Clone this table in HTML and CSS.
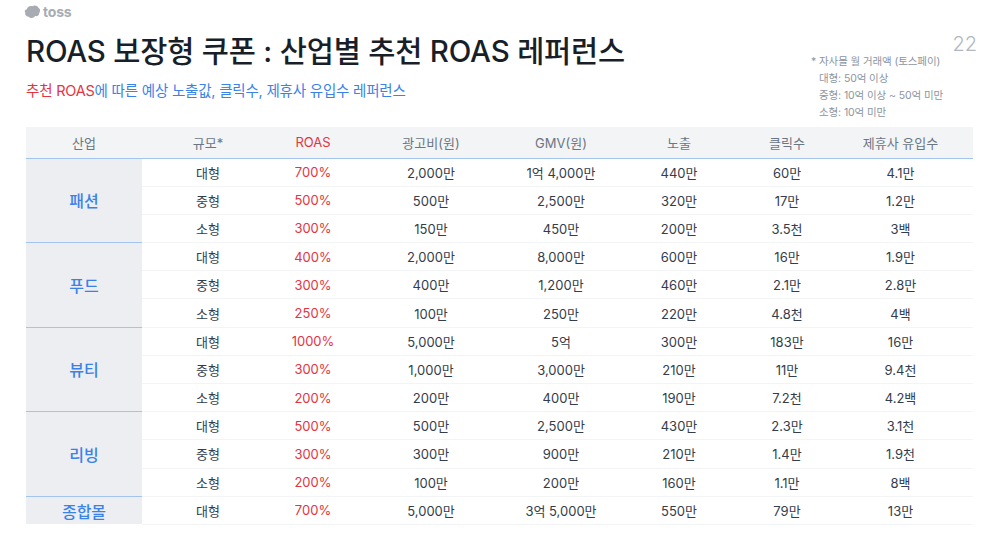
FILE: index.html
```html
<!DOCTYPE html>
<html lang="ko">
<head>
<meta charset="utf-8">
<link rel="stylesheet" href="styles.css">
</head>
<body>
<div class="slide">
  <div class="topbar">
    <div class="logo">
      <svg width="17" height="14" viewBox="0 0 15 13"><path d="M2.2 4.2C2.6 1.6 5.2 0.4 7.4 1.2C9.2 0 12 0.5 13 2.6C14.8 3.4 15 6 13.8 7.4C13.9 9.6 11.8 10.8 10 10.2C8.6 12.4 5.4 12.6 4 10.8C1.8 11 0.2 9 0.9 7C-0.3 5.8 0.6 4.2 2.2 4.2Z" fill="#a7acb3"/></svg>
      <span>toss</span>
    </div>
  </div>
  <div class="head">
    <div class="titles">
      <h1 class="title">ROAS 보장형 쿠폰 : 산업별 추천 ROAS 레퍼런스</h1>
      <p class="subtitle"><span class="red">추천 ROAS</span>에 따른 예상 노출값, 클릭수, 제휴사 유입수 레퍼런스</p>
    </div>
    <div class="side">
      <div class="page">22</div>
      <div class="note">
        <div>* 자사몰 월 거래액 (토스페이)</div>
        <div class="ind">대형: 50억 이상</div>
        <div class="ind">중형: 10억 이상 ~ 50억 미만</div>
        <div class="ind">소형: 10억 미만</div>
      </div>
    </div>
  </div>
  <table class="tbl">
    <colgroup>
      <col class="c1"><col class="c2"><col class="c3"><col class="c4"><col class="c5"><col class="c6"><col class="c7"><col class="c8">
    </colgroup>
    <thead>
      <tr><th>산업</th><th>규모*</th><th class="red">ROAS</th><th>광고비(원)</th><th>GMV(원)</th><th>노출</th><th>클릭수</th><th>제휴사 유입수</th></tr>
    </thead>
    <tbody class="grp">
      <tr><td class="ind-cell" rowspan="3">패션</td><td>대형</td><td class="red">700%</td><td>2,000만</td><td>1억 4,000만</td><td>440만</td><td>60만</td><td>4.1만</td></tr>
      <tr><td>중형</td><td class="red">500%</td><td>500만</td><td>2,500만</td><td>320만</td><td>17만</td><td>1.2만</td></tr>
      <tr><td>소형</td><td class="red">300%</td><td>150만</td><td>450만</td><td>200만</td><td>3.5천</td><td>3백</td></tr>
    </tbody>
    <tbody class="grp">
      <tr><td class="ind-cell" rowspan="3">푸드</td><td>대형</td><td class="red">400%</td><td>2,000만</td><td>8,000만</td><td>600만</td><td>16만</td><td>1.9만</td></tr>
      <tr><td>중형</td><td class="red">300%</td><td>400만</td><td>1,200만</td><td>460만</td><td>2.1만</td><td>2.8만</td></tr>
      <tr><td>소형</td><td class="red">250%</td><td>100만</td><td>250만</td><td>220만</td><td>4.8천</td><td>4백</td></tr>
    </tbody>
    <tbody class="grp">
      <tr><td class="ind-cell" rowspan="3">뷰티</td><td>대형</td><td class="red">1000%</td><td>5,000만</td><td>5억</td><td>300만</td><td>183만</td><td>16만</td></tr>
      <tr><td>중형</td><td class="red">300%</td><td>1,000만</td><td>3,000만</td><td>210만</td><td>11만</td><td>9.4천</td></tr>
      <tr><td>소형</td><td class="red">200%</td><td>200만</td><td>400만</td><td>190만</td><td>7.2천</td><td>4.2백</td></tr>
    </tbody>
    <tbody class="grp">
      <tr><td class="ind-cell" rowspan="3">리빙</td><td>대형</td><td class="red">500%</td><td>500만</td><td>2,500만</td><td>430만</td><td>2.3만</td><td>3.1천</td></tr>
      <tr><td>중형</td><td class="red">300%</td><td>300만</td><td>900만</td><td>210만</td><td>1.4만</td><td>1.9천</td></tr>
      <tr><td>소형</td><td class="red">200%</td><td>100만</td><td>200만</td><td>160만</td><td>1.1만</td><td>8백</td></tr>
    </tbody>
    <tbody class="grp">
      <tr><td class="ind-cell">종합몰</td><td>대형</td><td class="red">700%</td><td>5,000만</td><td>3억 5,000만</td><td>550만</td><td>79만</td><td>13만</td></tr>
    </tbody>
  </table>
</div>
</body>
</html>
```

FILE: styles.css
```css
* { box-sizing: border-box; }
html, body { margin: 0; padding: 0; background: #fff; }
body {
  font-family: "Inter", "Noto Sans CJK KR", "Noto Sans", sans-serif;
  color: #333d4b;
  width: 1000px;
  height: 543px;
  overflow: hidden;
}
.slide { padding: 4px 26px 0 26px; }
.topbar { height: 20px; }
.logo { display: flex; align-items: center; gap: 2px; color: #a7acb3; margin-left: -2px; }
.logo svg { display: block; }
.logo span { font-family: "Inter", sans-serif; font-weight: 700; font-size: 14px; letter-spacing: -0.2px; line-height: 16px; }
.head { display: flex; justify-content: space-between; height: 103px; }
.titles { padding-top: 7px; }
.title {
  margin: 0;
  font-size: 29.5px;
  font-weight: 500;
  color: #191f28;
  letter-spacing: -0.2px;
  line-height: 40px;
}
.subtitle {
  margin: 10px 0 0 0;
  font-size: 14.5px;
  color: #3b82e8;
  letter-spacing: -0.2px;
  line-height: 20px;
}
.red { color: #e5333f; }
.side { display: flex; flex-direction: column; width: 166px; padding-top: 8px; margin-right: -3px; }
.page { align-self: flex-end; font-size: 20px; color: #b0b8c1; font-weight: 300; line-height: 24px; }
.note {
  font-size: 10.5px;
  color: #8b95a1;
  line-height: 17px;
  margin-top: -3px;
  letter-spacing: -0.1px;
}
.note .ind { padding-left: 8px; }
.tbl {
  border-collapse: collapse;
  table-layout: fixed;
  width: 947px;
  font-size: 13px;
}
.c1 { width: 116px; } .c2 { width: 132px; } .c3 { width: 78px; } .c4 { width: 158px; }
.c5 { width: 102px; } .c6 { width: 134px; } .c7 { width: 82px; } .c8 { width: 145px; }
.tbl th {
  background: #f2f4f6;
  height: 31px;
  font-weight: 400;
  color: #6b7684;
  text-align: center;
  padding: 0;
}
.tbl th.red { color: #e5333f; }
.tbl td {
  height: 28.2px;
  padding: 0;
  text-align: center;
  color: #333d4b;
  border-bottom: 1px solid #f2f4f6;
}
.tbl td.red { color: #e5333f; }
.tbl tbody.grp { border-top: 1.5px solid #a3c4ee; }
.tbl td.ind-cell {
  background: #eceef2;
  color: #3b82e8;
  font-size: 16px;
  font-weight: 500;
  border-bottom: none;
}
```
